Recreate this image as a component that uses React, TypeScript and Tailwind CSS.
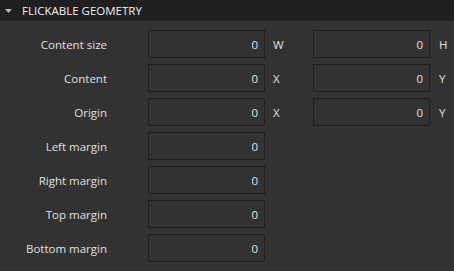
const Field = ({ value }: { value: string }) => (
  <div className="flex h-[28px] w-[117px] items-center justify-end border border-[#1f1f1f] bg-[#323232] pt-[2px] pr-[6px] text-[11.5px] text-[#e0e0e0]">
    {value}
  </div>
);

const rows: { label: string; units?: [string, string] }[] = [
  { label: "Content size", units: ["W", "H"] },
  { label: "Content", units: ["X", "Y"] },
  { label: "Origin", units: ["X", "Y"] },
  { label: "Left margin" },
  { label: "Right margin" },
  { label: "Top margin" },
  { label: "Bottom margin" },
];

export default function App() {
  return (
    <div
      className="h-[271px] w-[454px] overflow-hidden bg-[#323232] text-[#e0e0e0]"
      style={{ fontFamily: '"Open Sans", "Liberation Sans", sans-serif' }}
    >
      <div className="flex h-[21px] items-center bg-[#1f1f1f] pl-[5px] text-[11.5px] text-[#f0f0f0]">
        <svg width="7" height="4" viewBox="0 0 7 4" className="mr-[10px]">
          <path d="M0 0h7L3.5 4z" fill="#b8b8b8" />
        </svg>
        FLICKABLE GEOMETRY
      </div>
      <div className="flex flex-col gap-[6px] pt-[9px]">
        {rows.map((r) => (
          <div key={r.label} className="flex h-[28px] items-center text-[11.5px]">
            <div className="w-[107px] pt-[2px] text-right">{r.label}</div>
            <div className="ml-[41px]">
              <Field value="0" />
            </div>
            {r.units && (
              <>
                <div className="ml-[8px] w-[40px] pt-[2px]">{r.units[0]}</div>
                <Field value="0" />
                <div className="ml-[9px] pt-[2px]">{r.units[1]}</div>
              </>
            )}
          </div>
        ))}
      </div>
    </div>
  );
}
